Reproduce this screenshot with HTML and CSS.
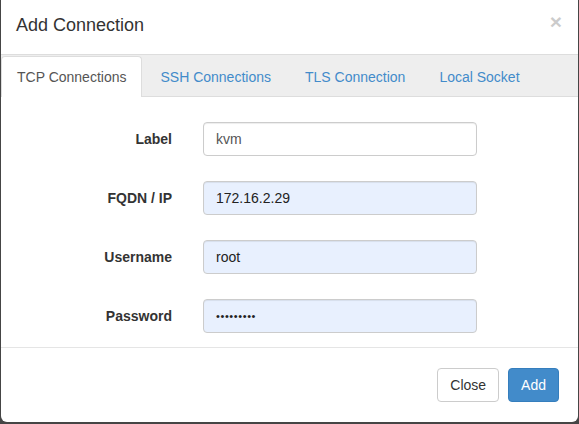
FILE: index.html
```html
<!DOCTYPE html>
<html>
<head>
<meta charset="utf-8">
<link rel="stylesheet" href="styles.css">
</head>
<body>
<div class="modal">
  <div class="modal-header">
    <h4 class="modal-title">Add Connection</h4>
    <button class="close" type="button">×</button>
  </div>
  <ul class="nav-tabs">
    <li class="tab active"><a>TCP Connections</a></li>
    <li class="tab"><a>SSH Connections</a></li>
    <li class="tab"><a>TLS Connection</a></li>
    <li class="tab"><a>Local Socket</a></li>
  </ul>
  <form class="form">
    <label class="form-label">Label</label>
    <div class="input">kvm</div>
    <label class="form-label">FQDN / IP</label>
    <div class="input autofill">172.16.2.29</div>
    <label class="form-label">Username</label>
    <div class="input autofill">root</div>
    <label class="form-label">Password</label>
    <div class="input autofill password">•••••••••</div>
  </form>
  <div class="modal-footer">
    <button class="btn btn-default" type="button">Close</button>
    <button class="btn btn-primary" type="button">Add</button>
  </div>
</div>
</body>
</html>
```

FILE: styles.css
```css
html, body {
  margin: 0;
  padding: 0;
}
body {
  background: #454545;
  width: 579px;
  height: 424px;
  overflow: hidden;
  font-family: "Liberation Sans", Arial, sans-serif;
  font-size: 14px;
  color: #333;
}
.modal {
  margin-left: 1px;
  width: 577px;
  height: 422px;
  background: #fff;
  border-radius: 0 0 6px 6px;
  display: flex;
  flex-direction: column;
}
.modal-header {
  display: flex;
  justify-content: space-between;
  align-items: flex-start;
  padding: 12px 16px 16px 15px;
  height: 26px;
}
.modal-title {
  margin: 0;
  font-size: 18px;
  font-weight: normal;
  line-height: 26px;
  color: #333;
}
.close {
  border: 0;
  background: none;
  padding: 0;
  margin-top: -1px;
  font-family: "Liberation Sans", Arial, sans-serif;
  font-size: 21px;
  font-weight: bold;
  line-height: 1;
  color: #000;
  opacity: 0.2;
}
.nav-tabs {
  list-style: none;
  margin: 0;
  padding: 1px 0 0 0;
  display: flex;
  background: #eee;
  border-top: 1px solid #ddd;
  border-bottom: 1px solid #ddd;
  height: 40px;
}
.tab {
  margin-right: 2px;
  margin-bottom: -1px;
}
.tab a {
  display: block;
  padding: 10px 15px;
  line-height: 20px;
  border: 1px solid transparent;
  border-bottom: 0;
  border-radius: 4px 4px 0 0;
  color: #428bca;
}
.tab.active a {
  background: #fff;
  border-color: #ddd;
  color: #555;
}
.form {
  display: grid;
  grid-template-columns: 171px 274px;
  column-gap: 31px;
  row-gap: 25px;
  padding: 25px 0 14px 0;
  margin: 0;
}
.form-label {
  text-align: right;
  font-weight: bold;
  line-height: 20px;
  padding-top: 7px;
  color: #333;
}
.input {
  box-sizing: border-box;
  height: 34px;
  padding: 6px 12px;
  line-height: 20px;
  border: 1px solid #ccc;
  border-radius: 4px;
  background: #fff;
  color: #555;
  box-shadow: inset 0 1px 1px rgba(0,0,0,0.075);
}
.autofill {
  background: #e8f0fe;
  color: #222;
}
.password {
  font-size: 11px;
  letter-spacing: 0.6px;
  line-height: 20px;
}
.modal-footer {
  border-top: 1px solid #e5e5e5;
  padding: 20px 19px 20px 0;
  display: flex;
  justify-content: flex-end;
  gap: 9px;
}
.btn {
  box-sizing: border-box;
  height: 34px;
  padding: 6px 12px;
  font-family: "Liberation Sans", Arial, sans-serif;
  font-size: 14px;
  line-height: 20px;
  border: 1px solid transparent;
  border-radius: 4px;
}
.btn-default {
  background: #fff;
  border-color: #ccc;
  color: #333;
}
.btn-primary {
  background: #428bca;
  border-color: #357ebd;
  color: #fff;
}
```
